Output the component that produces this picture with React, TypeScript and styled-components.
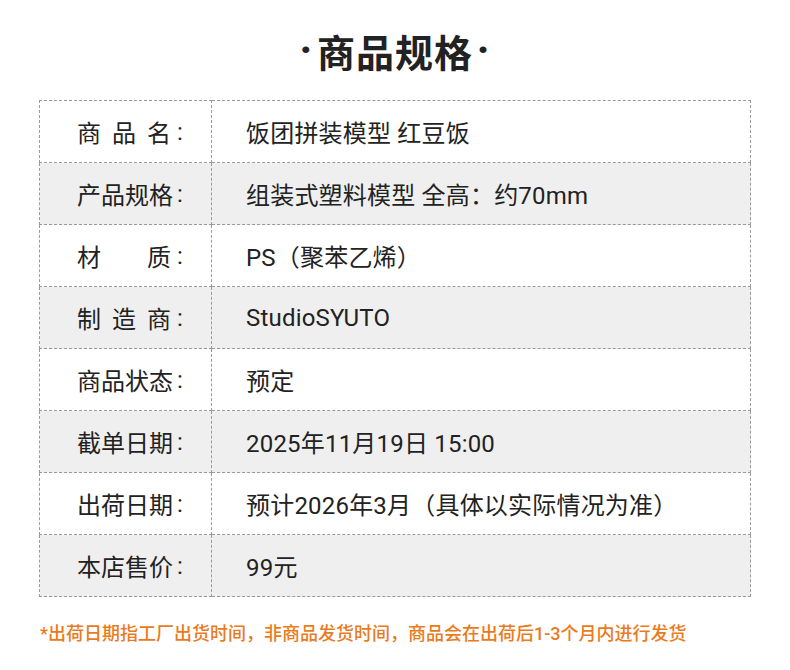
import React from "react";
import styled, { createGlobalStyle } from "styled-components";

const Global = createGlobalStyle`
  html, body { margin: 0; padding: 0; background: #ffffff; }
  body { font-family: Roboto, "Noto Sans CJK SC", sans-serif; color: #222222; }
`;

const Page = styled.div`
  width: 790px;
  display: flex;
  flex-direction: column;
  align-items: center;
`;

const Title = styled.h1`
  margin: 0;
  height: 100px;
  display: flex;
  align-items: center;
  justify-content: center;
  font-family: Roboto, "Noto Sans CJK SC", sans-serif;
  font-size: 38px;
  font-weight: 700;
  color: #222222;
  letter-spacing: 1px;
`;

const Dot = styled.span`
  font-weight: 900;
  margin: 0 4px;
`;

const Table = styled.table`
  width: 712px;
  border-collapse: collapse;
  font-size: 24px;
`;

const Row = styled.tr<{ $shade: boolean }>`
  height: 62px;
  background: ${(p) => (p.$shade ? "#efefef" : "#ffffff")};
`;

const LabelCell = styled.td`
  width: 134px;
  padding: 0 0 0 37px;
  border: 1px dashed #9a9a9a;
  vertical-align: middle;
`;

const Label = styled.div`
  display: flex;
  align-items: center;
`;

const LabelText = styled.span`
  display: inline-block;
  width: 94px;
  text-align: justify;
  text-align-last: justify;
  text-justify: inter-character;
  white-space: nowrap;
`;

const Colon = styled.span`
  margin-left: 6px;
`;

const ValueCell = styled.td`
  padding: 0 0 0 34px;
  border: 1px dashed #9a9a9a;
  vertical-align: middle;
  letter-spacing: 0.2px;
`;

const Note = styled.p`
  align-self: flex-start;
  margin: 22px 0 0 40px;
  font-size: 18px;
  font-weight: 500;
  color: #ea7b1c;
`;

const rows: [string, string][] = [
  ["商品名", "饭团拼装模型 红豆饭"],
  ["产品规格", "组装式塑料模型 全高：约70mm"],
  ["材质", "PS（聚苯乙烯）"],
  ["制造商", "StudioSYUTO"],
  ["商品状态", "预定"],
  ["截单日期", "2025年11月19日 15:00"],
  ["出荷日期", "预计2026年3月（具体以实际情况为准）"],
  ["本店售价", "99元"],
];

export default function App() {
  return (
    <Page>
      <Global />
      <Title>
        <Dot>·</Dot>商品规格<Dot>·</Dot>
      </Title>
      <Table>
        <tbody>
          {rows.map(([k, v], i) => (
            <Row key={k} $shade={i % 2 === 1}>
              <LabelCell>
                <Label>
                  <LabelText>{k}</LabelText>
                  <Colon>:</Colon>
                </Label>
              </LabelCell>
              <ValueCell>{v}</ValueCell>
            </Row>
          ))}
        </tbody>
      </Table>
      <Note>*出荷日期指工厂出货时间，非商品发货时间，商品会在出荷后1-3个月内进行发货</Note>
    </Page>
  );
}
